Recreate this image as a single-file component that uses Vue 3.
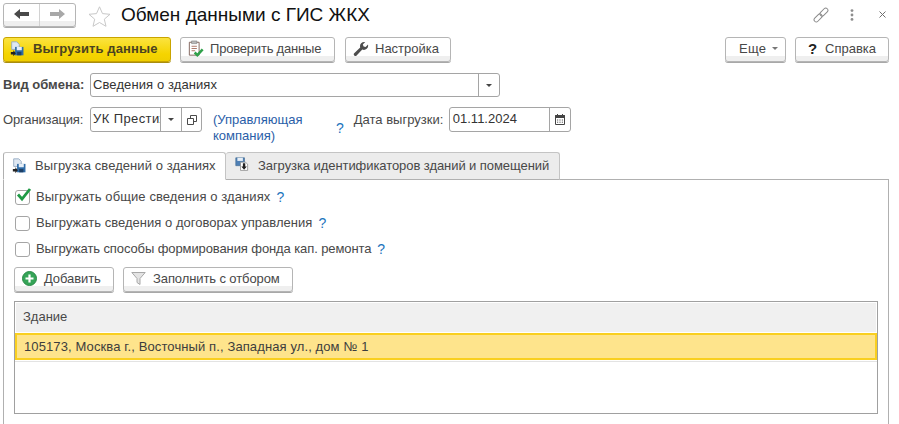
<script setup>
const checks = [
  { text: 'Выгружать общие сведения о зданиях', on: true, cls: 'ls-a' },
  { text: 'Выгружать сведения о договорах управления', on: false, cls: 'ls-b' },
  { text: 'Выгружать способы формирования фонда кап. ремонта', on: false, cls: 'ls-c' }
]
</script>

<template>
  <div class="page">
    <div class="title-row">
      <div class="nav">
        <div class="nav-btn">
          <svg width="15" height="10" viewBox="0 0 15 10"><path d="M0 5 L6 0 V3 H15 V7 H6 V10 Z" fill="#4a4a4a"/></svg>
        </div>
        <div class="nav-btn">
          <svg width="15" height="10" viewBox="0 0 15 10"><path d="M15 5 L9 0 V3 H0 V7 H9 V10 Z" fill="#a8a8a8"/></svg>
        </div>
      </div>
      <svg class="star" width="23" height="21" viewBox="0 0 23 21"><path d="M11.5 .8 L14.5 7.6 L22 8.3 L16.3 13.2 L18 20.3 L11.5 16.5 L5 20.3 L6.7 13.2 L1 8.3 L8.5 7.6 Z" fill="#fff" stroke="#c8c8c8" stroke-width="1"/></svg>
      <h1 class="title">Обмен данными с ГИС ЖКХ</h1>
      <div class="win-icons">
        <svg width="16" height="16" viewBox="0 0 16 16" fill="none" stroke="#8a8a8a" stroke-width="1">
          <rect x="-4.6" y="-2.2" width="9.4" height="4.4" rx="2.2" transform="translate(5 11) rotate(-45)"/>
          <rect x="-4.8" y="-2.2" width="9.4" height="4.4" rx="2.2" transform="translate(11 5) rotate(-45)"/>
        </svg>
        <svg class="dots" width="4" height="12" viewBox="0 0 4 12"><circle cx="2" cy="1.6" r="1.4" fill="#8e8e8e"/><circle cx="2" cy="6" r="1.4" fill="#8e8e8e"/><circle cx="2" cy="10.4" r="1.4" fill="#8e8e8e"/></svg>
        <svg class="close" width="7" height="7" viewBox="0 0 7 7"><path d="M.5 .5 L6.5 6.5 M6.5 .5 L.5 6.5" stroke="#707070" stroke-width="1"/></svg>
      </div>
    </div>

    <div class="toolbar">
      <button class="btn primary w-upload">
        <svg class="ic" width="16" height="16" viewBox="0 0 19 19">
          <path d="M2 1 H8 L11 4 V10 H2 Z" fill="#dfe8f2" stroke="#8fa6bf" stroke-width="1"/>
          <path d="M6 7 H16 V17 H6 Z" fill="#2f6ca8"/><path d="M8 7 H14 V11 H8 Z" fill="#e6eef6"/><path d="M8.5 13 H13.5 V17 H8.5 Z" fill="#1d3f66"/>
          <path d="M1 13 H4 V11 L7 14.5 L4 18 V16 H1 Z" fill="#222"/>
        </svg>
        <span class="ls-up">Выгрузить данные</span>
      </button>
      <button class="btn w-check">
        <svg class="ic tight" width="16" height="17" viewBox="0 0 18 19">
          <path d="M1.5 2.5 H12.5 V17 H1.5 Z" fill="#fff" stroke="#7a5a50" stroke-width="1"/>
          <path d="M4 1 H10 V4 H4 Z" fill="#b9b9b9" stroke="#777" stroke-width=".6"/>
          <path d="M4 7 H10 M4 9.5 H10 M4 12 H8" stroke="#a56a5a" stroke-width="1"/>
          <path d="M7.5 14 L10.5 17 L16.5 10.5" fill="none" stroke="#2fa04a" stroke-width="2.8"/>
        </svg>
        <span class="ls-check">Проверить данные</span>
      </button>
      <button class="btn w-setup">
        <svg class="ic tight" width="16" height="16" viewBox="0 0 16 16"><path d="M15 3.5 A4.3 4.3 0 0 1 9.3 8.6 L3.6 14.6 A1.7 1.7 0 0 1 1.2 12.2 L7.2 6.4 A4.3 4.3 0 0 1 12.2 1 L9.8 3.5 L10.6 5.5 L12.6 6 Z" fill="#4d4d4d"/></svg>
        <span>Настройка</span>
      </button>
      <div class="spacer"></div>
      <button class="btn w-more"><span class="ls-more">Еще</span><span class="caret"></span></button>
      <button class="btn w-help"><b class="help-q">?</b>Справка</button>
    </div>

    <div class="form-row one">
      <label class="lbl strong">Вид обмена:</label>
      <div class="field w-kind">
        <span class="val ls-kind">Сведения о зданиях</span>
        <span class="cell"><span class="caret dark"></span></span>
      </div>
    </div>

    <div class="form-row two">
      <label class="lbl ls-org">Организация:</label>
      <div class="field w-org">
        <span class="val clip">УК Престиж</span>
        <span class="cell"><span class="caret dark"></span></span>
        <span class="cell last">
          <svg width="10" height="10" viewBox="0 0 10 10" fill="none" stroke="#4a4a4a"><path d="M3.5 3 V.5 H9.5 V6.5 H7"/><path d="M.5 3.5 H6.5 V9.5 H.5 Z"/></svg>
        </span>
      </div>
      <a class="org-link">(Управляющая компания)</a>
      <span class="q q-org">?</span>
      <label class="lbl date-lbl">Дата выгрузки:</label>
      <div class="field w-date">
        <span class="val">01.11.2024</span>
        <span class="cell">
          <svg width="10" height="11" viewBox="0 0 10 11"><path d="M.5 1.5 H9.5 V10.5 H.5 Z" fill="#fff" stroke="#444"/><path d="M.5 1.5 H9.5 V3.5 H.5 Z" fill="#444" stroke="#444"/><path d="M2.5 0 V2 M7.5 0 V2" stroke="#444"/><path d="M2 6 H3.2 M4.4 6 H5.6 M6.8 6 H8 M2 8.2 H3.2 M4.4 8.2 H5.6 M6.8 8.2 H8" stroke="#555"/></svg>
        </span>
      </div>
    </div>

    <div class="tabs">
      <div class="tab active">
        <svg width="16" height="16" viewBox="0 0 19 19">
          <path d="M2 1 H8 L11 4 V10 H2 Z" fill="#dfe8f2" stroke="#8fa6bf" stroke-width="1"/>
          <path d="M6 7 H16 V17 H6 Z" fill="#2f6ca8"/><path d="M8 7 H14 V11 H8 Z" fill="#e6eef6"/><path d="M8.5 13 H13.5 V17 H8.5 Z" fill="#1d3f66"/>
          <path d="M1 13 H4 V11 L7 14.5 L4 18 V16 H1 Z" fill="#222"/>
        </svg>
        <span class="ls-tab1">Выгрузка сведений о зданиях</span>
      </div>
      <div class="tab inactive">
        <svg class="up" width="15" height="15" viewBox="0 0 19 19">
          <path d="M1 1 H12 V11 H1 Z" fill="#4f80b5" stroke="#3c668f" stroke-width=".8"/><path d="M3 1 H10 V5 H3 Z" fill="#e6eef6"/>
          <path d="M7 6.5 H13 L16 9 V17 H7 Z" fill="#fff" stroke="#8a8a8a"/>
          <path d="M10 8 H13 V12 H15 L11.5 16 L8 12 H10 Z" fill="#222"/>
        </svg>
        <span class="ls-tab2">Загрузка идентификаторов зданий и помещений</span>
      </div>
    </div>

    <section class="panel">
      <div v-for="c in checks" :key="c.text" class="check-row">
        <span class="box">
          <svg v-if="c.on" class="tick" width="17" height="15" viewBox="0 0 17 15"><path d="M3 7.5 L7 12 L15 2" fill="none" stroke="#1f9a45" stroke-width="2.8"/></svg>
        </span>
        <span class="check-text" :class="c.cls">{{ c.text }}</span>
        <span class="q">?</span>
      </div>

      <div class="actions">
        <button class="btn w-add">
          <svg class="ic" width="15" height="15" viewBox="0 0 15 15"><circle cx="7.5" cy="7.5" r="7" fill="#35a457" stroke="#2a8a47"/><path d="M7.5 3.5 V11.5 M3.5 7.5 H11.5" stroke="#fff" stroke-width="2.2"/></svg>
          <span class="ls-btn">Добавить</span>
        </button>
        <button class="btn w-fill">
          <svg class="ic" width="15" height="15" viewBox="0 0 15 15"><path d="M.8 1.5 H14.2 L9 7.5 V13.5 L6 11.5 V7.5 Z" fill="#e4e4e4" stroke="#a8a8a8"/></svg>
          <span class="ls-btn">Заполнить с отбором</span>
        </button>
      </div>

      <div class="table">
        <div class="thead">Здание</div>
        <div class="trow">105173, Москва г., Восточный п., Западная ул., дом № 1</div>
        <div class="tline"></div>
      </div>
    </section>
  </div>
</template>

<style>
html, body { margin: 0; background: #fff; }
</style>

<style scoped>
.page {
  width: 899px; height: 424px; overflow: hidden; box-sizing: border-box;
  padding: 3px 10px 0 3px;
  font: 13px/16px "Liberation Sans", Arial, sans-serif;
  color: #484848; background: #fff;
}
.title-row { display: flex; align-items: center; height: 24px; }
.nav {
  display: flex; width: 73px; height: 24px; box-sizing: border-box;
  border: 1px solid #b5b5b5; border-radius: 3px;
  background: linear-gradient(#fff 0 17px, #efefef 17px);
  box-shadow: 0 1px 0 #aaa;
}
.nav-btn { flex: 1; display: flex; align-items: center; justify-content: center; padding-bottom: 2px; }
.nav-btn + .nav-btn { border-left: 1px solid #d2d2d2; }
.star { margin-left: 12px; margin-top: 3px; }
.title { margin: -1px 0 0 10px; font: 400 19px/24px "Liberation Sans", Arial, sans-serif; color: #111; }
.win-icons { margin-left: auto; display: flex; align-items: center; margin-top: -1px; }
.dots { margin-left: 21px; }
.close { margin-left: 25px; margin-right: 3px; }

.toolbar { display: flex; margin-top: 10px; height: 25px; }
.spacer { flex: 1; }
.btn {
  display: flex; align-items: center; box-sizing: border-box; text-align: left;
  height: 25px; padding: 0 0 2px 7px; border: 1px solid #b5b5b5; border-radius: 3px;
  background: linear-gradient(#fff 0 18px, #efefef 18px);
  box-shadow: 0 1px 0 #a8a8a8;
  font: 13px/16px "Liberation Sans", Arial, sans-serif; color: #484848; white-space: nowrap;
}
.ic { margin-right: 7px; flex: none; }
.ic.tight { margin-right: 6px; }
.primary {
  padding-left: 6px; border-color: #c9a400; background: linear-gradient(#fbe33f, #f5d400 70%, #f0cf00);
  box-shadow: 0 1px 0 #a98e10; font-weight: 700; color: #4a4320;
}
.ls-up { letter-spacing: .12px; }
.ls-check { letter-spacing: -.2px; }
.ls-btn { letter-spacing: -.1px; }
.ls-more { letter-spacing: .3px; }
.ls-kind { letter-spacing: .1px; }
.ls-org { letter-spacing: -.15px; }
.ls-tab1 { letter-spacing: .07px; }
.ls-tab2 { letter-spacing: -.07px; }
.ls-a { letter-spacing: .09px; }
.ls-b { letter-spacing: .025px; }
.ls-c { letter-spacing: -.1px; }
.w-upload { width: 168px; }
.w-check { width: 155px; margin-left: 9px; }
.w-setup { width: 106px; margin-left: 10px; }
.w-more { width: 61px; margin-right: 9px; padding-left: 13px; }
.w-help { width: 94px; padding-left: 12px; }
.help-q { display: inline-block; width: 17px; color: #222; font-size: 15px; }
.w-add { width: 100px; }
.w-fill { width: 170px; margin-left: 9px; }
.caret {
  display: inline-block; width: 0; height: 0; margin-left: 6px;
  border: 3px solid transparent; border-top: 3px solid #777; border-bottom: 0;
}
.caret.dark { margin: 0; border-top-color: #444; }

.form-row { display: flex; align-items: center; }
.one { margin-top: 11px; height: 24px; }
.two { margin-top: 10px; height: 25px; }
.lbl { width: 87px; flex: none; white-space: nowrap; }
.strong { font-weight: 700; }
.field {
  display: flex; box-sizing: border-box; height: 100%;
  border: 1px solid #a5a5a5; border-radius: 3px; background: #fff; color: #333; overflow: hidden;
}
.val { flex: 1; min-width: 0; padding: 0 2px; line-height: 22px; white-space: nowrap; }
.clip { overflow: hidden; padding: 0 0 0 2px; letter-spacing: .4px; }
.cell { flex: none; width: 20px; display: flex; align-items: center; justify-content: center; border-left: 1px solid #a5a5a5; }
.last { width: 19px; }
.w-kind { width: 410px; }
.w-org { width: 112px; }
.w-date { width: 122px; }
.org-link { width: 110px; margin-left: 11px; margin-top: 11px; color: #2a5ea8; line-height: 16px; flex: none; position: relative; top: 3px; }
.q { color: #1c74bd; font-size: 14px; margin-left: 6px; }
.q-org { margin-left: 13px; margin-top: 16px; }
.date-lbl { margin-left: 10px; width: 95px; }
.w-date .val { padding-left: 3px; }

.tabs { display: flex; margin-top: 20px; height: 28px; position: relative; z-index: 1; margin-bottom: -1px; }
.tab { box-sizing: border-box; display: flex; align-items: center; height: 28px; border: 1px solid #c4c4c4; border-radius: 3px 3px 0 0; white-space: nowrap; padding-bottom: 1px; }
.tab svg { margin-right: 7px; flex: none; }
.tab svg.up { margin-right: 8px; margin-top: -3px; }
.active { width: 223px; padding-left: 8px; background: #fff; border-color: #c4c4c4 #c4c4c4 #fff #b0b0b0; }
.inactive { width: 334px; padding-left: 9px; background: #ececec; border-left: 0; border-bottom-color: #b0b0b0; }

.panel { box-sizing: border-box; width: 886px; height: 262px; border: 1px solid #b0b0b0; padding: 4px 10px 0 10px; }
.check-row { display: flex; align-items: center; height: 26px; margin-left: 1px; }
.box { position: relative; flex: none; box-sizing: border-box; width: 15px; height: 15px; border: 1px solid #a5a5a5; border-radius: 3px; background: #fff; margin-right: 6px; }
.tick { position: absolute; left: -1px; top: -4px; }
.check-text { white-space: nowrap; }
.actions { display: flex; margin-top: 5px; }
.table { box-sizing: border-box; width: 864px; height: 113px; margin-top: 9px; border: 1px solid #a0a0a0; padding: 1px 1px 0; }
.thead { height: 29px; line-height: 28px; padding-left: 7px; background: #f0f0f0; }
.trow { box-sizing: border-box; height: 27px; margin: 1px -1px 0; border: 2px solid #f9cf20; background: #fee48c; line-height: 23px; padding-left: 7px; color: #3d3d3d; letter-spacing: .11px; }
.tline { height: 1px; margin: 1px -1px 0; background: #e3e3e3; }
</style>
